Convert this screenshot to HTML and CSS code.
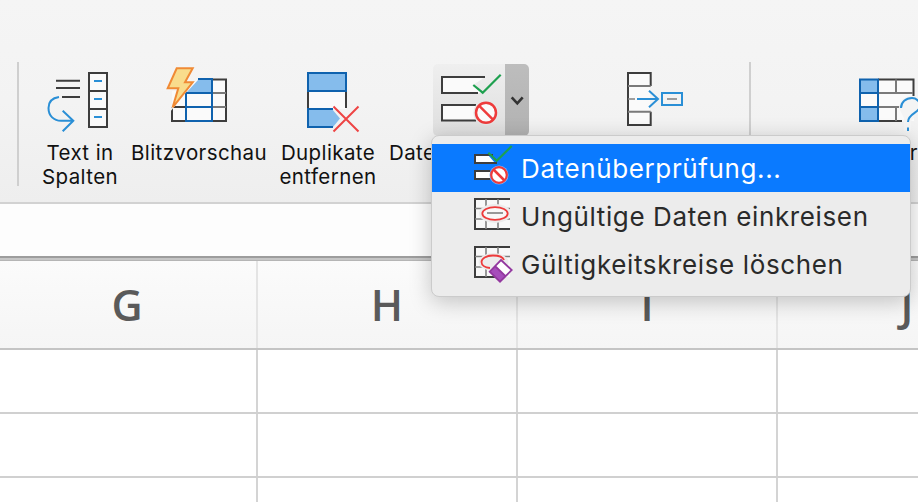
FILE: index.html
```html
<!DOCTYPE html>
<html lang="de">
<head>
<meta charset="utf-8">
<title>Datenüberprüfung</title>
<link rel="stylesheet" href="styles.css">
</head>
<body>
<div class="page">
  <div class="ribbon">
    <div class="sep"></div>
    <div class="tool tool-text">
      <svg class="tool-icon" width="100" height="72" viewBox="30 64 100 72">
        <path class="ln" d="M56 80.700H80M56 88H80M62 97H80"/>
        <path class="ln" d="M89 73H107V127H89ZM89 91H107M89 109H107" fill="#fafafa"/>
        <path class="bl" d="M94 81H102M94 99H102M94 117H102"/>
        <path class="bl" d="M59 97C52 98 48.500 102 48.500 108C48.500 116 54 120.700 61 120.700H73M62.700 110.700L73.300 120.700L62.700 131.300"/>
      </svg>
      <div class="label">Text in<br>Spalten</div>
    </div>
    <div class="tool tool-flash">
      <svg class="tool-icon" width="138" height="72" viewBox="130 64 138 72">
        <path d="M172 80H226.500V121H172Z" fill="#fafafa"/>
        <path class="ln" d="M212 79.500H226V121H172V107M172 107H186"/>
        <path class="gy2" d="M212 93H226M212 107H226"/>
        <path d="M198 80H212V93H186Z" fill="#85bcec"/>
        <path class="db" d="M186 93V121H212V79H198M186 93H212M186 107H212"/>
        <path d="M174 66H196L189 80H196L170 112L176 91H164Z" fill="#f4f4f4"/>
        <path d="M176.700 68.300H192.700L185 82.300H192.700L172.700 107.300L178.300 88.300H167.700Z" fill="#f9dc8c" stroke="#f08a35" stroke-width="2"/>
      </svg>
      <div class="label">Blitzvorschau</div>
    </div>
    <div class="tool tool-dup">
      <svg class="tool-icon" width="120" height="72" viewBox="268 64 120 72">
        <path d="M308 91H346V109H308Z" fill="#fafafa"/>
        <path class="ln" d="M308 91V109M346 91V108"/>
        <path d="M308 73H346V91H308Z" fill="#85bcec" stroke="#0f62ae" stroke-width="2"/>
        <path d="M308 109H332L340 118.500L333 127H308Z" fill="#85bcec"/>
        <path class="db" d="M333 109H308V127H333"/>
        <path class="rd" d="M333.500 106.500L358.500 131.500M358.500 106.500L333.500 131.500"/>
      </svg>
      <div class="label">Duplikate<br>entfernen</div>
    </div>
    <div class="tool tool-valid">
      <div class="split">
        <svg class="split-main" width="72" height="72" viewBox="433 64 72 72">
          <path d="M442 77H485L473 85L482 93H442Z" fill="#fafafa"/>
          <path class="ln" d="M485 77H442V93H478"/>
          <path class="gr" d="M473.300 85L482.700 92.700L500.700 74.700"/>
          <path d="M442 105H475V120.500H442Z" fill="#fafafa"/>
          <path class="ln" d="M476 105H442V120.500H476"/>
          <circle cx="486" cy="112.700" r="12.500" fill="#e6e6e6"/>
          <circle cx="486" cy="112.700" r="10" fill="#fafafa" stroke="#ee3b3b" stroke-width="2.500"/>
          <path class="rd2" d="M479 105.700L493 119.700"/>
        </svg>
        <div class="split-arrow">
          <svg width="24" height="72" viewBox="505 64 24 72">
            <path class="chev" d="M511.700 97.300L517.300 103.300L522.700 97.300"/>
          </svg>
        </div>
      </div>
      <div class="label label-start">Datenüberprüfung</div>
    </div>
    <div class="tool tool-cons">
      <svg class="tool-icon" width="179" height="72" viewBox="570 64 179 72">
        <path d="M628 73H650V125H628Z" fill="#fafafa"/>
        <path class="ln" d="M650.700 86V73H628V125H650.700V111.700"/>
        <path class="gy2" d="M628 86H650.700M628 111.700H650.700"/>
        <path class="gy" d="M628 99H635M667 99H677"/>
        <path class="bl" d="M637 99H658M649 90.700L658 99L649 107.300"/>
        <path class="bl" d="M662 93H682V105H662Z"/>
      </svg>
    </div>
    <div class="sep"></div>
    <div class="tool tool-what">
      <svg class="tool-icon" width="167" height="72" viewBox="751 64 167 72">
        <path d="M860 79H914V121H860Z" fill="#fafafa"/>
        <path d="M860 80H878V93H860ZM860 107H878V120H860Z" fill="#85bcec"/>
        <path class="ln" d="M878 79.500H913.500V96M878 121H902"/>
        <path class="gy2" d="M896 79.500V93M896 107V121M878 93H913M878 107H900"/>
        <path class="db" d="M860 79.500H878V93H860ZM860 93V107M860 107H878V121H860ZM878 79.500V121"/>
        <path d="M899 108C899 100 905 96 912 96H918V113L911 121V131H904V118Z" fill="#f4f4f4"/>
        <path class="bl" d="M901 108C901 102 906 98 912 98C917 98 920 102 920 106C920 113 908 113 908 122"/>
        <path class="bl" d="M908 127.500V131"/>
      </svg>
      <div class="label label-end">er</div>
    </div>
  </div>

  <div class="formula"></div>
  <div class="divider"></div>

  <div class="sheet">
    <div class="row head"><div class="cell">G</div><div class="cell">H</div><div class="cell">I</div><div class="cell">J</div></div>
    <div class="row"><div class="cell"></div><div class="cell"></div><div class="cell"></div><div class="cell"></div></div>
    <div class="row"><div class="cell"></div><div class="cell"></div><div class="cell"></div><div class="cell"></div></div>
    <div class="row"><div class="cell"></div><div class="cell"></div><div class="cell"></div><div class="cell"></div></div>
  </div>

  <div class="menu">
    <div class="item active">
      <svg width="40" height="48" viewBox="474 144 40 48">
        <path d="M475 155H488L495 163H475Z" fill="#fff"/>
        <path class="ln" d="M493 155H475V163H497"/>
        <path d="M475 171H490V179H475Z" fill="#fff"/>
        <path class="ln" d="M490 171H475V179H490"/>
        <path class="gr" d="M488.300 152.700L496.700 160.700L511.700 146"/>
        <circle cx="499" cy="175" r="9.500" fill="#7cb6ff"/>
        <circle cx="499" cy="175" r="7.800" fill="#fff" stroke="#ee3b3b" stroke-width="2.200"/>
        <path class="rd2" d="M493.500 169.500L504.500 180.500"/>
      </svg>
      <span>Datenüberprüfung...</span>
    </div>
    <div class="item">
      <svg width="40" height="48" viewBox="474 192 40 48">
        <path d="M475 199H510V229H475Z" fill="#f8f8f8"/>
        <path class="ln" d="M510 199H475V229H510"/>
        <path class="gy" d="M475 208.500H510M475 219H510M486 199V229M498 199V229"/>
        <ellipse cx="495" cy="213.500" rx="16" ry="9.500" fill="#ececec"/>
        <ellipse cx="495" cy="213.500" rx="12.700" ry="6.400" fill="#f8f8f8" stroke="#ee3b3b" stroke-width="1.800"/>
        <path class="gy" d="M487 213H503"/>
      </svg>
      <span>Ungültige Daten einkreisen</span>
    </div>
    <div class="item">
      <svg width="40" height="48" viewBox="474 240 40 48">
        <path d="M475 247H510V277H475Z" fill="#f8f8f8"/>
        <path class="ln" d="M510 247H475V277H495"/>
        <path class="gy" d="M475 256.500H510M475 267H488M486 247V277M498 247V257"/>
        <ellipse cx="493.500" cy="262" rx="15" ry="9" fill="#ececec"/>
        <path d="M504 260C503 257 498 255.500 493 255.500C486 255.500 481.500 258.500 481.500 262C481.500 265 485 267.500 490 268" fill="none" stroke="#ee3b3b" stroke-width="1.800"/>
        <path d="M495 266L506 276.700L500 281.700L489.700 271.700Z" fill="#a64dbb"/>
        <path d="M495 266L501 260L511.700 270L506 276.700Z" fill="#fff"/>
        <path d="M501 260L511.700 270L500 281.700L489.700 271.700ZM495 266L506 276.700" fill="none" stroke="#93389f" stroke-width="1.800"/>
      </svg>
      <span>Gültigkeitskreise löschen</span>
    </div>
  </div>
</div>
</body>
</html>
```

FILE: styles.css
```css
* { box-sizing: border-box; }
html, body { margin: 0; padding: 0; }
body { width: 918px; height: 502px; overflow: hidden; background: #fff; font-family: "Inter", "Liberation Sans", sans-serif; }
.page { position: relative; width: 918px; height: 502px; overflow: hidden; display: flex; flex-direction: column; }

.ribbon { flex: none; height: 204px; display: flex; align-items: flex-start; padding: 62px 0 0 17px; background: linear-gradient(#f5f5f5, #f3f3f3 50%, #eeeeee); border-bottom: 2px solid #d2d2d2; overflow: hidden; }
.sep { flex: none; width: 2px; height: 124px; background: #cfcfcf; }
.tool { flex: none; padding-top: 2px; display: flex; flex-direction: column; align-items: center; }
.tool-icon, .split svg { display: block; overflow: visible; }
.tool-text { width: 100px; margin-left: 11px; }
.tool-flash { width: 138px; }
.tool-dup { width: 120px; }
.tool-valid { width: 182px; align-items: flex-start; }
.tool-cons { width: 179px; }
.tool-what { width: 167px; align-items: flex-end; }
.label { margin-top: 5px; font-size: 20.500px; line-height: 24px; letter-spacing: .4px; color: #111; text-align: center; white-space: nowrap; }
.label-start { text-align: left; }
.split { display: flex; flex: none; width: 96px; height: 72px; margin-left: 45px; border-radius: 5px; overflow: hidden; }
.split-main { background: linear-gradient(#efefef, #dedede); }
.split-arrow { width: 24px; background: linear-gradient(#bdbdbd, #b2b2b2); }
.tool-valid .label { margin-left: 1px; }

.ln, .bl, .db, .gr, .rd, .rd2, .gy, .gy2, .chev { fill: none; }
.ln { stroke: #3d3d3d; stroke-width: 2; }
.bl { stroke: #2a8fd6; stroke-width: 2; }
.db { stroke: #0f62ae; stroke-width: 2; }
.gr { stroke: #1ea04f; stroke-width: 2.200; }
.rd { stroke: #ee4444; stroke-width: 2; }
.rd2 { stroke: #ee3b3b; stroke-width: 2.500; }
.gy { stroke: #808080; stroke-width: 1.600; }
.gy2 { stroke: #7a7a7a; stroke-width: 2; }
.ln[fill], .bl[fill] { fill: #fafafa; }
.chev { stroke: #333; stroke-width: 2.600; }

.formula { flex: none; height: 52px; background: #fdfdfd; }
.divider { flex: none; height: 5px; background: #c6c6c6; border-top: 2px solid #9d9d9d; border-bottom: 1px solid #b5b5b5; }

.sheet { flex: 1; margin-left: -2px; width: 1040px; }
.row { display: grid; grid-template-columns: repeat(4, 260px); height: 64px; border-bottom: 2px solid #d0d0d0; }
.cell { border-right: 2px solid #d4d4d4; }
.head { height: 89px; background: linear-gradient(#fbfbfb, #f5f5f5); border-bottom-color: #c4c4c4; }
.head .cell { display: flex; align-items: center; justify-content: center; font-family: "Open Sans", sans-serif; font-size: 43px; font-weight: 600; color: #5a5a5a; border-right-color: #e4e4e4; }

.menu { position: absolute; left: 431px; top: 135px; width: 480px; height: 162px; padding: 8px 0; background: #ececec; border: 1px solid #cbcbcb; border-radius: 8px; box-shadow: 0 5px 22px rgba(0, 0, 0, .22); }
.item { display: flex; align-items: center; gap: 7px; height: 48px; padding-left: 42px; font-size: 26px; letter-spacing: .62px; color: #2a2a2a; white-space: nowrap; }
.item svg { flex: none; display: block; overflow: visible; }
.active { background: #0a7aff; color: #fff; }
```
